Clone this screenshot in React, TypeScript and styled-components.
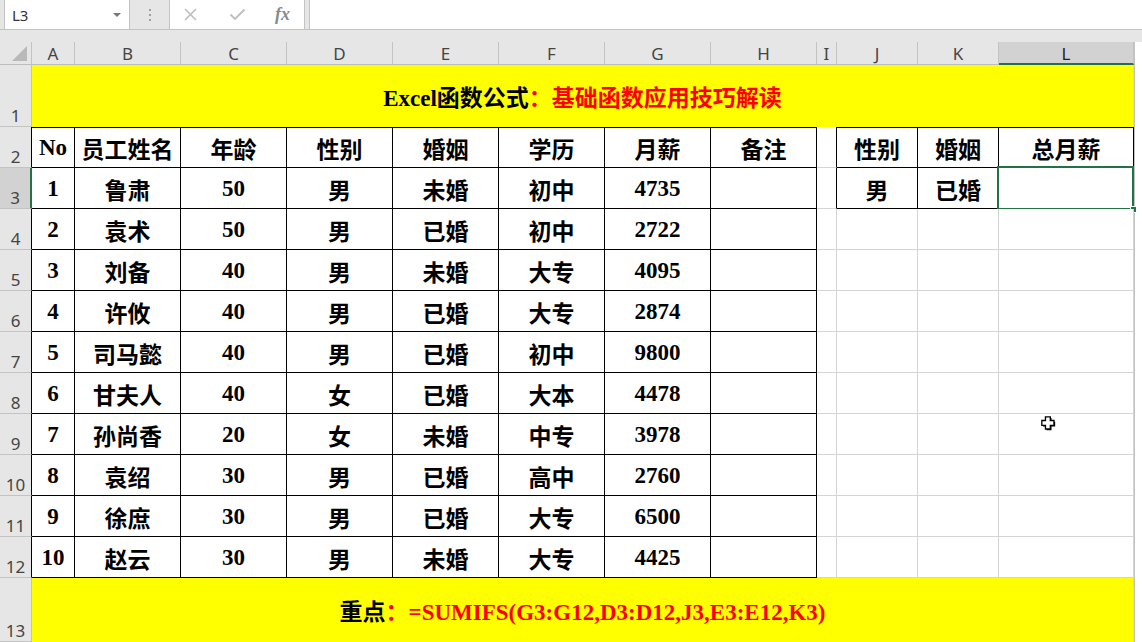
import React from "react";
import styled, { createGlobalStyle } from "styled-components";

const GRID = "#d4d4d4";
const BLACK = "#000";
const GREEN = "#217346";
const YELLOW = "#ffff00";
const RED = "#ff0000";
const HEAD_BG = "#e6e6e6";
const HEAD_SEL = "#d2d2d2";
const HEAD_LINE = "#c3c3c3";

const colWidths = [43, 106, 106, 106, 106, 106, 106, 106, 20, 81, 81, 135];
const letters = "ABCDEFGHIJKL".split("");

const headers = ["No", "员工姓名", "年龄", "性别", "婚姻", "学历", "月薪", "备注"];
const people: (string | number)[][] = [
  [1, "鲁肃", 50, "男", "未婚", "初中", 4735],
  [2, "袁术", 50, "男", "已婚", "初中", 2722],
  [3, "刘备", 40, "男", "未婚", "大专", 4095],
  [4, "许攸", 40, "男", "已婚", "大专", 2874],
  [5, "司马懿", 40, "男", "已婚", "初中", 9800],
  [6, "甘夫人", 40, "女", "已婚", "大本", 4478],
  [7, "孙尚香", 20, "女", "未婚", "中专", 3978],
  [8, "袁绍", 30, "男", "已婚", "高中", 2760],
  [9, "徐庶", 30, "男", "已婚", "大专", 6500],
  [10, "赵云", 30, "男", "未婚", "大专", 4425],
];
const lookup: Record<number, string[]> = {
  2: ["性别", "婚姻", "总月薪"],
  3: ["男", "已婚", ""],
};

const GlobalStyle = createGlobalStyle`
  html, body { margin: 0; padding: 0; background: #fff; }
  body {
    width: 1142px;
    height: 642px;
    overflow: hidden;
    font-family: "Noto Sans", "Noto Sans CJK SC", sans-serif;
  }
`;

const Page = styled.div`
  position: relative;
  width: 1142px;
  height: 642px;
  overflow: hidden;
  background: ${HEAD_BG};
`;

const FormulaBar = styled.div`
  display: flex;
  height: 30px;
  box-sizing: border-box;
  border-bottom: 1px solid ${HEAD_LINE};
  background: ${HEAD_BG};
`;

const Box = styled.div<{ $w?: number }>`
  box-sizing: border-box;
  height: 30px;
  margin-top: -1px;
  background: #fff;
  border: 1px solid ${HEAD_LINE};
  border-bottom: none;
  ${(p) => (p.$w ? `width: ${p.$w}px;` : "flex: 1;")}
`;

const NameBox = styled(Box)`
  margin-left: 4px;
  display: flex;
  align-items: center;
  justify-content: space-between;
  padding: 1px 7px 0 7px;
  font-size: 15px;
  color: #333;
`;

const Caret = styled.span`
  width: 0;
  height: 0;
  border-left: 4px solid transparent;
  border-right: 4px solid transparent;
  border-top: 4px solid #777;
  margin-right: 1px;
`;

const Grip = styled.div`
  width: 39px;
  display: flex;
  flex-direction: column;
  align-items: center;
  justify-content: center;
  gap: 3px;
  span {
    width: 2px;
    height: 2px;
    background: #a0a0a0;
  }
`;

const FxBox = styled(Box)`
  display: flex;
  align-items: center;
  padding-left: 13px;
  gap: 31px;
`;

const Fx = styled.span`
  font-family: "Liberation Serif", serif;
  font-style: italic;
  font-weight: 700;
  font-size: 18px;
  color: #8a8a8a;
  margin-left: -2px;
`;

const InputBox = styled(Box)`
  margin-left: 4px;
  border-right: none;
`;

const Band = styled.div`
  height: 12px;
  background: ${HEAD_BG};
`;

const Sheet = styled.div`
  display: grid;
  grid-template-columns: 32px ${colWidths.map((w) => `${w}px`).join(" ")} 1fr;
  grid-template-rows: 23px 62px repeat(11, 41px) 64px;
  background: #fff;
`;

const Corner = styled.div`
  box-sizing: border-box;
  background: ${HEAD_BG};
  border-right: 1px solid ${HEAD_LINE};
  border-bottom: 1px solid #bdbdbd;
  display: flex;
  align-items: flex-end;
  justify-content: flex-end;
  padding: 0 4px 3px 0;
`;

const CornerMark = styled.span`
  width: 0;
  height: 0;
  border-left: 15px solid transparent;
  border-bottom: 15px solid #b9b9b9;
`;

const ColHead = styled.div<{ $sel?: boolean }>`
  box-sizing: border-box;
  display: flex;
  align-items: center;
  justify-content: center;
  background: ${(p) => (p.$sel ? HEAD_SEL : HEAD_BG)};
  border-right: 1px solid ${HEAD_LINE};
  border-bottom: ${(p) => (p.$sel ? `2px solid ${GREEN}` : "1px solid #bdbdbd")};
  font-size: 17px;
  color: ${(p) => (p.$sel ? "#222" : "#444")};
  padding-top: 1px;
`;

const HeadFill = styled.div`
  background: #fff;
  border-left: 1px solid ${HEAD_LINE};
`;

const RowHead = styled.div<{ $sel?: boolean; $edge?: string }>`
  box-sizing: border-box;
  display: flex;
  align-items: flex-end;
  justify-content: center;
  padding-bottom: 2px;
  line-height: 1;
  background: ${(p) => (p.$sel ? HEAD_SEL : HEAD_BG)};
  border-bottom: 1px solid ${HEAD_LINE};
  border-right: ${(p) => (p.$sel ? `2px solid ${GREEN}` : `1px solid ${p.$edge ?? HEAD_LINE}`)};
  font-size: 17px;
  color: #444;
`;

const Banner = styled.div`
  grid-column: span 12;
  box-sizing: border-box;
  display: flex;
  align-items: center;
  justify-content: center;
  background: ${YELLOW};
  border-right: 1px solid ${GRID};
  font-family: "Liberation Serif", "Noto Sans CJK SC", serif;
  font-weight: 700;
  font-size: 23px;
  color: #000;
  white-space: nowrap;
`;

const Red = styled.span`
  color: ${RED};
`;

const Cell = styled.div<{ $r?: string; $b?: string; $t?: string }>`
  box-sizing: border-box;
  position: relative;
  display: flex;
  align-items: center;
  justify-content: center;
  padding-top: 1px;
  background: #fff;
  border-right: 1px solid ${(p) => p.$r ?? GRID};
  border-bottom: 1px solid ${(p) => p.$b ?? GRID};
  border-top: ${(p) => (p.$t ? `1px solid ${p.$t}` : "none")};
  font-family: "Liberation Serif", "Noto Sans CJK SC", serif;
  font-weight: 700;
  font-size: 23px;
  color: #000;
  white-space: nowrap;
`;

const Fill = styled.div`
  background: #fff;
  border-left: 1px solid ${HEAD_LINE};
`;

const Selection = styled.div`
  position: absolute;
  top: -2px;
  left: -2px;
  right: -1px;
  bottom: -2px;
  border: 2px solid ${GREEN};
  pointer-events: none;
  &::after {
    content: "";
    position: absolute;
    right: -5px;
    bottom: -5px;
    width: 5px;
    height: 5px;
    background: ${GREEN};
    border: 1px solid #fff;
  }
`;

const Cursor = styled.svg`
  position: absolute;
  left: 1040px;
  top: 415px;
`;

function cellText(r: number, c: number): string {
  if (r === 2 && c <= 7) return headers[c];
  if (r >= 3 && c <= 6) return String(people[r - 3][c]);
  if (c >= 9 && lookup[r]) return lookup[r][c - 9];
  return "";
}

function DataRow({ r }: { r: number }) {
  return (
    <>
      <RowHead $sel={r === 3} $edge={BLACK}>
        {r}
      </RowHead>
      {colWidths.map((_, c) => {
        const inMain = c <= 7;
        const inSide = c >= 9 && r <= 3;
        const framed = inMain || inSide;
        const right = framed || (c === 8 && r <= 3) ? BLACK : GRID;
        return (
          <Cell
            key={c}
            $r={right}
            $b={framed ? BLACK : GRID}
            $t={r === 2 && framed ? BLACK : undefined}
          >
            {cellText(r, c)}
            {r === 3 && c === 11 && <Selection />}
          </Cell>
        );
      })}
      <Fill />
    </>
  );
}

export default function App() {
  return (
    <Page>
      <GlobalStyle />
      <FormulaBar>
        <NameBox $w={126}>
          <span>L3</span>
          <Caret />
        </NameBox>
        <Grip>
          <span />
          <span />
          <span />
        </Grip>
        <FxBox $w={136}>
          <svg width="15" height="15" viewBox="0 0 15 15">
            <path d="M2 2 L13 13 M13 2 L2 13" stroke="#bdbdbd" strokeWidth="1.6" fill="none" />
          </svg>
          <svg width="17" height="15" viewBox="0 0 17 15">
            <path d="M1.5 7.5 L6 12 L15.5 2.5" stroke="#bdbdbd" strokeWidth="1.8" fill="none" />
          </svg>
          <Fx>fx</Fx>
        </FxBox>
        <InputBox />
      </FormulaBar>
      <Band />
      <Sheet>
        <Corner>
          <CornerMark />
        </Corner>
        {letters.map((l) => (
          <ColHead key={l} $sel={l === "L"}>
            {l}
          </ColHead>
        ))}
        <HeadFill />

        <RowHead>1</RowHead>
        <Banner>
          Excel函数公式<Red>：基础函数应用技巧解读</Red>
        </Banner>
        <Fill />

        {Array.from({ length: 11 }, (_, i) => (
          <DataRow key={i} r={i + 2} />
        ))}

        <RowHead>13</RowHead>
        <Banner>
          重点<Red>：=SUMIFS(G3:G12,D3:D12,J3,E3:E12,K3)</Red>
        </Banner>
        <Fill />
      </Sheet>
      <Cursor width="17" height="17" viewBox="0 0 14 14">
        <path
          d="M4.5 1.5 H8.5 V4.5 H11.5 V8.5 H8.5 V11.5 H4.5 V8.5 H1.5 V4.5 H4.5 Z"
          fill="#000"
          transform="translate(1 1)"
        />
        <path
          d="M4.5 1.5 H8.5 V4.5 H11.5 V8.5 H8.5 V11.5 H4.5 V8.5 H1.5 V4.5 H4.5 Z"
          fill="#fff"
          stroke="#000"
          strokeWidth="1.1"
        />
      </Cursor>
    </Page>
  );
}
